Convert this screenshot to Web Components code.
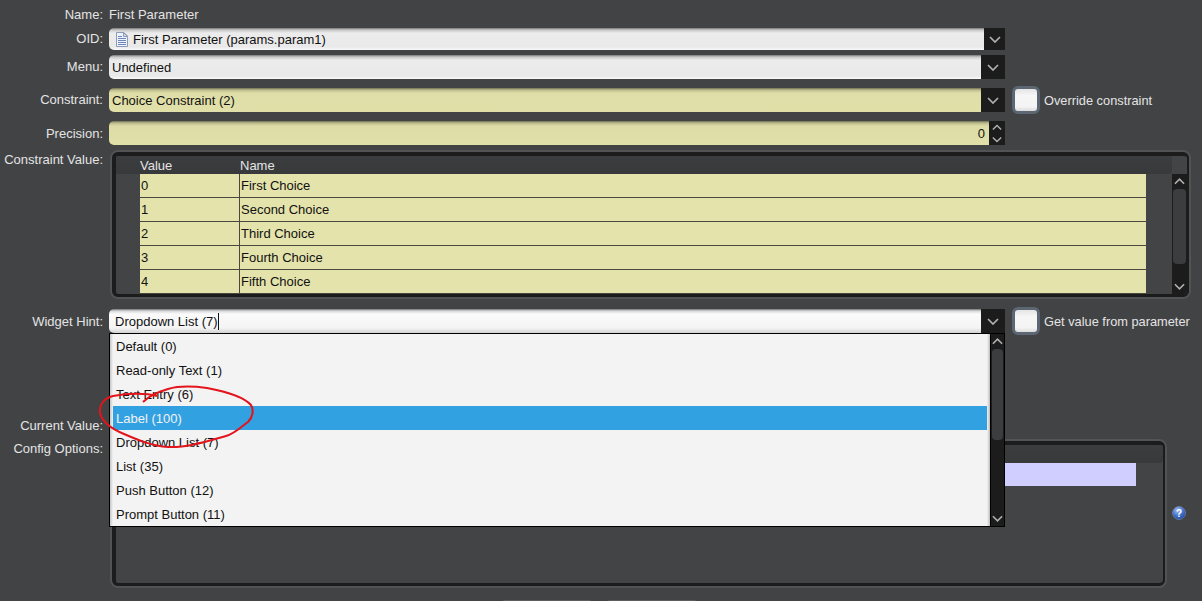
<!DOCTYPE html>
<html>
<head>
<meta charset="utf-8">
<title>Parameter</title>
<style>
  html, body { margin: 0; height: 601px; overflow: hidden; }
  body { background: #424345; position: relative; font-family: "Liberation Sans", Arial, sans-serif; font-size: 13px; color: #e4e4e4; }
</style>
</head>
<body>
<param-row label="Name:" h="22" top="4"><span style="line-height:22px">First Parameter</span></param-row>
<param-row label="OID:" h="22" top="2">
  <ui-combo kind="plain" btn="21" pad="7"><file-icon></file-icon>First Parameter (params.param1)</ui-combo>
</param-row>
<param-row label="Menu:" h="24" top="5"><ui-combo kind="plain" pad="3">Undefined</ui-combo></param-row>
<param-row label="Constraint:" h="24" top="9">
  <ui-combo kind="yellow" pad="3">Choice Constraint (2)</ui-combo>
  <ui-check slot="aside">Override constraint</ui-check>
</param-row>
<param-row label="Precision:" h="24" top="9" nudge><ui-spin value="0"></ui-spin></param-row>
<param-row label="Constraint Value:" h="149" top="5">
  <ui-frame style="width:1081px;height:149px">
    <ui-table>
      <ui-cell-row value="0" name="First Choice"></ui-cell-row>
      <ui-cell-row value="1" name="Second Choice"></ui-cell-row>
      <ui-cell-row value="2" name="Third Choice"></ui-cell-row>
      <ui-cell-row value="3" name="Fourth Choice"></ui-cell-row>
      <ui-cell-row value="4" name="Fifth Choice"></ui-cell-row>
    </ui-table>
  </ui-frame>
</param-row>
<param-row label="Widget Hint:" h="24" top="10" nudge>
  <ui-combo kind="edit" pad="6">Dropdown List (7)<i style="display:block;width:1px;height:17px;background:#111"></i><ui-popup slot="popup">
      <ui-item>Default (0)</ui-item>
      <ui-item>Read-only Text (1)</ui-item>
      <ui-item>Text Entry (6)</ui-item>
      <ui-item selected>Label (100)</ui-item>
      <ui-item>Dropdown List (7)</ui-item>
      <ui-item>List (35)</ui-item>
      <ui-item>Push Button (12)</ui-item>
      <ui-item>Prompt Button (11)</ui-item>
    </ui-popup></ui-combo>
  <ui-check slot="aside">Get value from parameter</ui-check>
</param-row>
<param-row label="Current Value:" h="22" top="81" nudge></param-row>
<param-row label="Config Options:" h="149" top="3">
  <ui-frame style="width:1057px;height:149px">
    <ui-config-body></ui-config-body>
  </ui-frame>
  <ui-help slot="aside"></ui-help>
</param-row>
<ui-footer></ui-footer>
<ui-scribble></ui-scribble>

<script>
const chevron = (up, w = 12) => `<svg width="${w}" height="7" viewBox="0 0 12 7" style="display:block"><polyline points="1,${up ? 6 : 1} 6,${up ? 1 : 6} 11,${up ? 6 : 1}" fill="none" stroke="#b0b0b0" stroke-width="1.7"/></svg>`;

class ParamRow extends HTMLElement {
  constructor() {
    super();
    this.attachShadow({ mode: 'open' });
    this.shadowRoot.innerHTML = `
      <style>
        :host { display: flex; align-items: flex-start; height: var(--h); margin-top: var(--top); }
        .label { width: 103px; margin-right: 6px; flex: none; text-align: right; line-height: 22px; white-space: nowrap; color: #e4e4e4; }
        .main { display: flex; height: 100%; }
        :host([h="24"]) .label { line-height: 24px; }
        :host([h="149"]) .label { line-height: 20px; }
        :host([nudge]) .label { padding-top: 1px; }
      </style>
      <div class="label"></div>
      <div class="main"><slot></slot></div>
      <slot name="aside"></slot>`;
  }
  connectedCallback() {
    this.style.setProperty('--h', this.getAttribute('h') + 'px');
    this.style.setProperty('--top', this.getAttribute('top') + 'px');
    this.shadowRoot.querySelector('.label').textContent = this.getAttribute('label');
  }
}

class UiCombo extends HTMLElement {
  constructor() {
    super();
    this.attachShadow({ mode: 'open' });
    this.shadowRoot.innerHTML = `
      <style>
        :host { display: flex; position: relative; width: 896px; height: 100%; color: #111; }
        .field { flex: 1; display: flex; align-items: center; white-space: nowrap; border-radius: 5px 0 0 5px; box-sizing: border-box; padding-left: var(--pad); }
        :host([kind="plain"]) .field { background: linear-gradient(#77787a 0, #c8c8c8 2px, #ececec 5px, #e9e9e9 calc(100% - 3px), #fafafa 100%); }
        :host([kind="yellow"]) .field { background: linear-gradient(#6f6e52 0, #bdbb8c 2px, #dfdea8 5px, #e1e0a9 100%); }
        :host([kind="edit"]) .field { background: linear-gradient(#6f7072 0, #d8d8d8 2px, #fbfbfb 5px, #f4f4f4 calc(100% - 5px), #d2d2d2 100%); }
        .btn { width: var(--btn); flex: none; background: #1c1c1c; display: flex; align-items: center; justify-content: center; }
      </style>
      <div class="field"><slot></slot></div>
      <div class="btn">${chevron(false)}</div>
      <slot name="popup"></slot>`;
  }
  connectedCallback() {
    this.style.setProperty('--pad', (this.getAttribute('pad') || 3) + 'px');
    this.style.setProperty('--btn', (this.getAttribute('btn') || 24) + 'px');
  }
}

class FileIcon extends HTMLElement {
  constructor() {
    super();
    this.attachShadow({ mode: 'open' });
    this.shadowRoot.innerHTML = `
      <style>
        :host { display: block; flex: none; width: 12px; height: 15px; margin-right: 5px; }
        svg { display: block; }
      </style>
      <svg width="12" height="15" viewBox="0 0 12 15">
        <polygon points="0.5,0.5 8,0.5 11.5,4 11.5,14.5 0.5,14.5" fill="#eef2fa" stroke="#8d9ab8" stroke-width="1"/>
        <polygon points="7.5,0.5 7.5,4.5 11.5,4.5" fill="#cfd8ea" stroke="#8d9ab8" stroke-width="1"/>
        <rect x="2" y="4" width="4" height="1" fill="#6f86b8"/>
        <rect x="2" y="6" width="8" height="1" fill="#6f86b8"/>
        <rect x="2" y="8" width="8" height="1" fill="#6f86b8"/>
        <rect x="2" y="10" width="8" height="1" fill="#6f86b8"/>
        <rect x="2" y="12" width="8" height="1" fill="#6f86b8"/>
      </svg>`;
  }
}

class UiSpin extends HTMLElement {
  constructor() {
    super();
    this.attachShadow({ mode: 'open' });
    this.shadowRoot.innerHTML = `
      <style>
        :host { display: flex; width: 896px; height: 100%; color: #111; }
        .field { flex: 1; text-align: right; line-height: 25px; padding-right: 4px; border-radius: 5px 0 0 5px; background: linear-gradient(#6f6e52 0, #bdbb8c 2px, #dddca6 5px, #e1e0a9 100%); }
        .btns { width: 16px; background: #1c1c1c; display: flex; flex-direction: column; align-items: center; justify-content: center; gap: 5px; }
      </style>
      <div class="field"></div>
      <div class="btns">${chevron(true, 10)}${chevron(false, 10)}</div>`;
  }
  connectedCallback() {
    this.shadowRoot.querySelector('.field').textContent = this.getAttribute('value');
  }
}

class UiCheck extends HTMLElement {
  constructor() {
    super();
    this.attachShadow({ mode: 'open' });
    this.shadowRoot.innerHTML = `
      <style>
        :host { display: flex; align-items: center; gap: 4px; margin: -2px 0 0 7px; height: 28px; white-space: nowrap; color: #e4e4e4; font-size: 12.8px; }
        .box { width: 22px; height: 22px; border: 3px solid #5d6673; border-radius: 6px; background: linear-gradient(#e4e4e4, #f6f6f6 30%, #f4f4f4 80%, #dcdcdc); }
      </style>
      <div class="box"></div><slot></slot>`;
  }
}

class UiFrame extends HTMLElement {
  constructor() {
    super();
    this.attachShadow({ mode: 'open' });
    this.shadowRoot.innerHTML = `
      <style>
        :host { display: block; box-sizing: border-box; margin-left: 1px; border: 2px solid #525355; border-radius: 8px; }
        .in { box-sizing: border-box; height: 100%; border: solid #1c1c1c; border-width: 4px 2px 3px 4px; border-radius: 6px; overflow: hidden; background: #434446; }
      </style>
      <div class="in"><slot></slot></div>`;
  }
}

class UiTable extends HTMLElement {
  constructor() {
    super();
    this.attachShadow({ mode: 'open' });
    this.shadowRoot.innerHTML = `
      <style>
        :host { display: flex; height: 100%; }
        .left { flex: 1; min-width: 0; }
        .head { height: 18px; display: flex; background: linear-gradient(#3c3d3f, #38393b); border-radius: 0 0 4px 0; color: #e4e4e4; line-height: 20px; }
        .head span:first-child { margin-left: 24px; width: 100px; }
        .rows { margin-left: 24px; width: 1006px; }
        ui-scroll { margin-top: 18px; }
      </style>
      <div class="left">
        <div class="head"><span>Value</span><span>Name</span></div>
        <div class="rows"><slot></slot></div>
      </div>
      <ui-scroll thumb="75"></ui-scroll>`;
  }
}

class UiCellRow extends HTMLElement {
  constructor() {
    super();
    this.attachShadow({ mode: 'open' });
    this.shadowRoot.innerHTML = `
      <style>
        :host { display: flex; height: 24px; box-sizing: border-box; background: #e4e3ac; border-bottom: 1px solid #47483f; color: #111; line-height: 23px; }
        .v { width: 98px; padding-left: 1px; border-right: 1px solid #47483f; }
        .n { padding-left: 1px; }
      </style>
      <div class="v"></div><div class="n"></div>`;
  }
  connectedCallback() {
    this.shadowRoot.querySelector('.v').textContent = this.getAttribute('value');
    this.shadowRoot.querySelector('.n').textContent = this.getAttribute('name');
  }
}

class UiScroll extends HTMLElement {
  constructor() {
    super();
    this.attachShadow({ mode: 'open' });
    this.shadowRoot.innerHTML = `
      <style>
        :host { display: flex; flex-direction: column; flex: none; width: 15px; box-sizing: border-box; background: #1c1c1c; }
        .b { height: 15px; flex: none; display: flex; align-items: center; justify-content: center; }
        .track { flex: 1; padding: 0 1px; }
        .thumb { height: var(--thumb); background: #3c3d3f; border-radius: 4px; }
      </style>
      <div class="b">${chevron(true, 11)}</div>
      <div class="track"><div class="thumb"></div></div>
      <div class="b">${chevron(false, 11)}</div>`;
  }
  connectedCallback() {
    this.style.setProperty('--thumb', this.getAttribute('thumb') + 'px');
  }
}

class UiPopup extends HTMLElement {
  constructor() {
    super();
    this.attachShadow({ mode: 'open' });
    this.shadowRoot.innerHTML = `
      <style>
        :host { position: absolute; left: 0; top: 24px; width: 896px; height: 194px; box-sizing: border-box; border: 1px solid #000; display: flex; background: #f3f3f3; z-index: 2; }
        .list { flex: 1; padding-left: 3px; background: linear-gradient(90deg, #c6c6c6, #f3f3f3 3px); }
        .gap { width: 3px; background: linear-gradient(90deg, #f3f3f3, #bcbcbc); }
        ui-scroll { border-left: 1px solid #000; width: 14px; }
      </style>
      <div class="list"><slot></slot></div>
      <div class="gap"></div>
      <ui-scroll thumb="91"></ui-scroll>`;
  }
}

class UiItem extends HTMLElement {
  constructor() {
    super();
    this.attachShadow({ mode: 'open' });
    this.shadowRoot.innerHTML = `
      <style>
        :host { display: block; height: 24px; line-height: 26px; padding-left: 3px; color: #111; }
        :host([selected]) { background: #32a1e2; color: #f2f2f2; }
      </style>
      <slot></slot>`;
  }
}

class UiConfigBody extends HTMLElement {
  constructor() {
    super();
    this.attachShadow({ mode: 'open' });
    this.shadowRoot.innerHTML = `
      <style>
        :host { display: block; }
        .head { height: 18px; background: linear-gradient(#3c3d3f, #38393b); border-radius: 0 0 4px 0; }
        .row { height: 23px; width: 1020px; background: #d0ceff; }
      </style>
      <div class="head"></div>
      <div class="row"></div>`;
  }
}

class UiHelp extends HTMLElement {
  constructor() {
    super();
    this.attachShadow({ mode: 'open' });
    this.shadowRoot.innerHTML = `
      <style>:host { display: block; width: 14px; height: 14px; margin: 67px 0 0 5px; }</style>
      <svg width="14" height="14" viewBox="0 0 14 14" style="display:block">
        <defs><radialGradient id="g" cx=".4" cy=".3" r=".8"><stop offset="0" stop-color="#a9c4f2"/><stop offset=".55" stop-color="#3e6fc8"/><stop offset="1" stop-color="#1d3f94"/></radialGradient></defs>
        <circle cx="7" cy="7" r="6.5" fill="url(#g)" stroke="#7d8fb5" stroke-width=".6"/>
        <text x="7" y="10.6" text-anchor="middle" font-family="Liberation Sans" font-weight="700" font-size="10" fill="#fff">?</text>
      </svg>`;
  }
}

class UiFooter extends HTMLElement {
  constructor() {
    super();
    this.attachShadow({ mode: 'open' });
    this.shadowRoot.innerHTML = `
      <style>
        :host { display: flex; gap: 15px; margin: 12px 0 0 502px; }
        b { display: block; width: 90px; height: 3px; background: #5c5d5f; border-radius: 3px 3px 0 0; }
      </style>
      <b></b><b></b>`;
  }
}

class UiScribble extends HTMLElement {
  constructor() {
    super();
    this.attachShadow({ mode: 'open' });
    this.shadowRoot.innerHTML = `
      <style>:host { position: absolute; left: 0; top: 0; z-index: 5; pointer-events: none; }</style>
      <svg width="300" height="460" style="display:block">
        <path d="M157 396C146 393 128 393 113 396C104 398 99 405 100 413C102 422 112 429 124 434C138 440 152 446 168 447C186 448 208 441 226 436C236 433 243 425 248 422C253 417 254 410 251 405C244 397 228 392 207 388C192 386 178 386 168 389C158 392 148 397 143 402" fill="none" stroke="#e3141b" stroke-width="2"/>
      </svg>`;
  }
}

customElements.define('param-row', ParamRow);
customElements.define('ui-combo', UiCombo);
customElements.define('file-icon', FileIcon);
customElements.define('ui-spin', UiSpin);
customElements.define('ui-check', UiCheck);
customElements.define('ui-frame', UiFrame);
customElements.define('ui-table', UiTable);
customElements.define('ui-cell-row', UiCellRow);
customElements.define('ui-scroll', UiScroll);
customElements.define('ui-popup', UiPopup);
customElements.define('ui-item', UiItem);
customElements.define('ui-config-body', UiConfigBody);
customElements.define('ui-help', UiHelp);
customElements.define('ui-footer', UiFooter);
customElements.define('ui-scribble', UiScribble);
</script>
</body>
</html>
